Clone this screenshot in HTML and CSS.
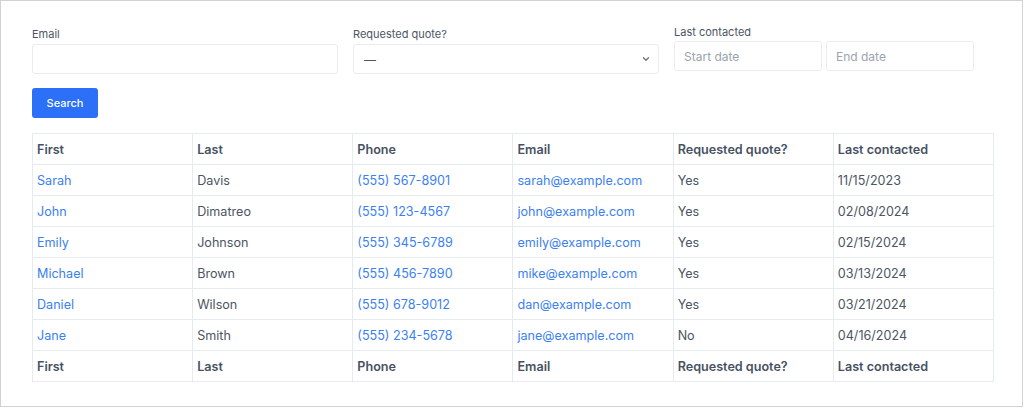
FILE: index.html
```html
<!DOCTYPE html>
<html>
<head>
<meta charset="utf-8">
<link rel="stylesheet" href="styles.css">
</head>
<body>
<div class="frame">
  <form class="filters">
    <div class="field f-email">
      <label class="lbl">Email</label>
      <div class="input"></div>
    </div>
    <div class="field f-quote">
      <label class="lbl">Requested quote?</label>
      <div class="input select"><span class="dash">—</span>
        <svg class="chev" width="8" height="6" viewBox="0 0 8 6"><path d="M1.5 1.8 L4 4.2 L6.5 1.8" fill="none" stroke="#6b7280" stroke-width="1.3" stroke-linecap="round" stroke-linejoin="round"/></svg>
      </div>
    </div>
    <div class="field f-date">
      <label class="lbl">Last contacted</label>
      <div class="dates">
        <div class="input date"><span class="ph">Start date</span></div>
        <div class="input date"><span class="ph">End date</span></div>
      </div>
    </div>
  </form>
  <button class="btn" type="button">Search</button>
  <table class="tbl">
    <thead>
      <tr><th>First</th><th>Last</th><th>Phone</th><th>Email</th><th>Requested quote?</th><th>Last contacted</th></tr>
    </thead>
    <tbody>
      <tr><td class="lnk">Sarah</td><td>Davis</td><td class="lnk">(555) 567-8901</td><td class="lnk">sarah@example.com</td><td>Yes</td><td>11/15/2023</td></tr>
      <tr><td class="lnk">John</td><td>Dimatreo</td><td class="lnk">(555) 123-4567</td><td class="lnk">john@example.com</td><td>Yes</td><td>02/08/2024</td></tr>
      <tr><td class="lnk">Emily</td><td>Johnson</td><td class="lnk">(555) 345-6789</td><td class="lnk">emily@example.com</td><td>Yes</td><td>02/15/2024</td></tr>
      <tr><td class="lnk">Michael</td><td>Brown</td><td class="lnk">(555) 456-7890</td><td class="lnk">mike@example.com</td><td>Yes</td><td>03/13/2024</td></tr>
      <tr><td class="lnk">Daniel</td><td>Wilson</td><td class="lnk">(555) 678-9012</td><td class="lnk">dan@example.com</td><td>Yes</td><td>03/21/2024</td></tr>
      <tr><td class="lnk">Jane</td><td>Smith</td><td class="lnk">(555) 234-5678</td><td class="lnk">jane@example.com</td><td>No</td><td>04/16/2024</td></tr>
    </tbody>
    <tfoot>
      <tr><th>First</th><th>Last</th><th>Phone</th><th>Email</th><th>Requested quote?</th><th>Last contacted</th></tr>
    </tfoot>
  </table>
</div>
</body>
</html>
```

FILE: styles.css
```css
* { box-sizing: border-box; }
html, body { margin: 0; padding: 0; background: #fff; }
body { font-family: Inter, "Noto Sans", "Liberation Sans", sans-serif; }
.frame {
  width: 1023px;
  height: 407px;
  border: 1px solid #d2d2d2;
  padding: 24px 0 0 31px;
  background: #fff;
}
.filters {
  display: grid;
  grid-template-columns: 306px 306px 300px;
  column-gap: 15px;
  margin: 0;
}
.field { display: flex; flex-direction: column; }
.lbl {
  font-size: 11px;
  line-height: 14px;
  color: #4b5563;
  margin-bottom: 3px;
  padding-top: 2px;
}
.f-date .lbl { padding-top: 0; margin-bottom: 2px; }
.input {
  height: 30px;
  border: 1px solid #e8ecf0;
  border-radius: 3px;
  background: #fff;
}
.select {
  display: flex;
  align-items: center;
  justify-content: space-between;
  padding: 0 8px 0 10px;
}
.dash { font-size: 12px; color: #4b5563; }
.chev { display: block; }
.dates { display: flex; gap: 4px; }
.date {
  width: 148px;
  height: 30px;
  display: flex;
  align-items: center;
  padding-left: 9px;
}
.ph { font-size: 12px; color: #9aa3ae; }
.btn {
  display: block;
  margin-top: 14px;
  width: 66px;
  height: 30px;
  border: none;
  border-radius: 3px;
  background: #2b70f6;
  color: #fff;
  font-family: inherit;
  font-size: 11px;
  font-weight: 500;
  padding: 0;
}
.tbl {
  margin-top: 15px;
  width: 962px;
  border-collapse: collapse;
  table-layout: fixed;
  font-size: 12.6px;
}
.tbl th, .tbl td {
  border: 1px solid #e6ebf1;
  height: 31px;
  padding: 0 4px;
  text-align: left;
  white-space: nowrap;
}
.tbl th { font-weight: 600; color: #475163; }
.tbl td { color: #4b5563; font-weight: 400; }
.tbl td.lnk { color: #3b7ff2; }
```
